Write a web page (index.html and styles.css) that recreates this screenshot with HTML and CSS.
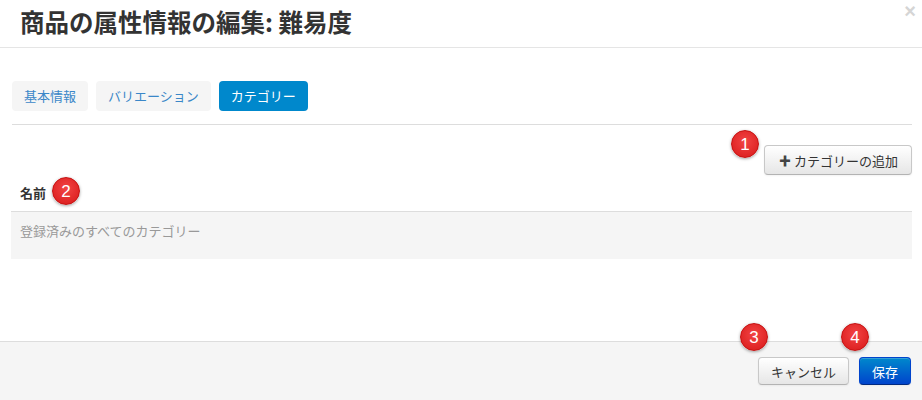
FILE: index.html
```
<!DOCTYPE html>
<html lang="ja">

<head>
	<meta charset="UTF-8">
	<title>商品の属性情報の編集</title>
	<link rel="stylesheet" href="styles.css">
</head>

<body>
	<div class="modal">
		<header class="modal-header">
			<h1>商品の属性情報の編集: 難易度</h1>
			<span class="close">×</span>
		</header>

		<section class="modal-body">
			<div class="tabs">
				<a class="tab">基本情報</a>
				<a class="tab">バリエーション</a>
				<a class="tab active">カテゴリー</a>
			</div>
			<div class="rule"></div>

			<div class="toolbar">
				<button class="btn"><span class="plus">✚</span> カテゴリーの追加</button>
			</div>

			<div class="label">名前</div>
			<div class="list">
				<div class="row">登録済みのすべてのカテゴリー</div>
			</div>
		</section>

		<footer class="modal-footer">
			<button class="btn">キャンセル</button>
			<button class="btn btn-primary">保存</button>
		</footer>

		<span class="badge b1">1</span>
		<span class="badge b2">2</span>
		<span class="badge b3">3</span>
		<span class="badge b4">4</span>
	</div>
</body>

</html>
```

FILE: styles.css
```
body {
	margin: 0;
	background-color: #fff;
	color: #333;
	font: 13px 'Noto Sans CJK JP', 'Liberation Sans', sans-serif;
}

.modal {
	position: relative;
	width: 922px;
	height: 400px;
	overflow: hidden;
}

.modal-header {
	height: 47px;
	padding: 0 20px;
	border-bottom: 1px solid #e5e5e5;
}

.modal-header h1 {
	margin: 0;
	font-size: 24.5px;
	font-weight: bold;
	line-height: 44px;
	color: #333;
}

.close {
	position: absolute;
	top: 0;
	right: 6px;
	font: bold 20px 'Liberation Sans', sans-serif;
	color: #d5d5d5;
}

.modal-body {
	height: 293px;
	box-sizing: border-box;
	padding: 33px 10px 0 12px;
}

.tabs {
	display: flex;
	gap: 8px;
}

.tab {
	height: 30px;
	line-height: 30px;
	padding: 0 12px;
	border-radius: 4px;
	background-color: #f5f5f5;
	color: #3a87c8;
}

.tab.active {
	background-color: #0088cc;
	color: #fff;
}

.rule {
	margin-top: 13px;
	border-top: 1px solid #ddd;
}

.toolbar {
	display: flex;
	justify-content: flex-end;
	margin-top: 20px;
}

.btn {
	height: 30px;
	padding: 0 12px;
	font: 13px 'Noto Sans CJK JP', 'Liberation Sans', sans-serif;
	color: #333;
	border: 1px solid #c8c8c8;
	border-bottom-color: #b3b3b3;
	border-radius: 4px;
	background: linear-gradient(#ffffff, #e6e6e6);
	box-shadow: inset 0 1px 0 rgba(255, 255, 255, 0.2), 0 1px 2px rgba(0, 0, 0, 0.05);
}

.toolbar .btn {
	padding: 0 13px 0 14px;
}

.plus {
	font-size: 12px;
	color: #444;
}

.label {
	height: 36px;
	line-height: 36px;
	padding-left: 8px;
	font-weight: bold;
}

.list {
	margin-left: -1px;
	border-top: 1px solid #ddd;
	background-color: #f5f5f5;
}

.row {
	height: 47px;
	box-sizing: border-box;
	padding: 9px 9px 0;
	line-height: 20px;
	color: #999;
}

.modal-footer {
	display: flex;
	justify-content: flex-end;
	gap: 10px;
	height: 100px;
	padding: 15px 11px 0;
	border-top: 1px solid #ddd;
	background-color: #f5f5f5;
}

.modal-footer .btn {
	height: 28px;
}

.btn-primary {
	color: #fff;
	border-color: #0044cc #0044cc #002a80;
	background: linear-gradient(#0088cc, #0044cc);
}

.badge {
	position: absolute;
	display: flex;
	align-items: center;
	justify-content: center;
	box-sizing: border-box;
	width: 28px;
	height: 28px;
	padding-top: 1px;
	border-radius: 50%;
	font: 17px 'Liberation Sans', sans-serif;
	color: #fff;
	background: radial-gradient(circle at 50% 40%, #f24444, #d81818);
	border: 1px solid #c41010;
	box-shadow: 0 1px 3px rgba(0, 0, 0, 0.35);
}

.b1 {
	left: 731px;
	top: 130px;
}

.b2 {
	left: 52px;
	top: 177px;
}

.b3 {
	left: 740px;
	top: 323px;
}

.b4 {
	left: 841px;
	top: 323px;
}
```
